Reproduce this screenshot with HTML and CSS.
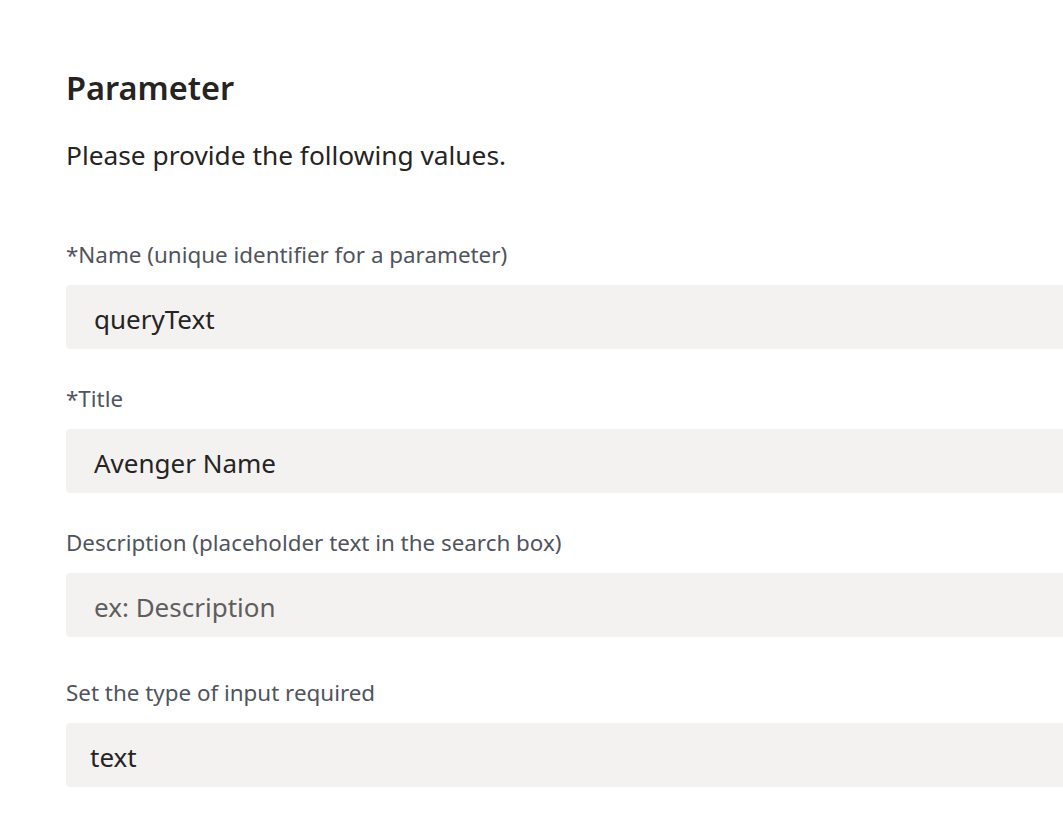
FILE: index.html
```html
<!DOCTYPE html>
<html lang="en">
<head>
<meta charset="utf-8">
<title>Parameter</title>
<link rel="stylesheet" href="styles.css">
</head>
<body>
<main class="page">
  <h1 class="title">Parameter</h1>
  <p class="intro">Please provide the following values.</p>
  <form class="form">
    <div class="field">
      <label class="label" for="f-name">*Name (unique identifier for a parameter)</label>
      <input class="input" id="f-name" type="text" value="queryText">
    </div>
    <div class="field">
      <label class="label" for="f-title">*Title</label>
      <input class="input" id="f-title" type="text" value="Avenger Name">
    </div>
    <div class="field">
      <label class="label" for="f-desc">Description (placeholder text in the search box)</label>
      <input class="input" id="f-desc" type="text" placeholder="ex: Description">
    </div>
    <div class="field field-type">
      <label class="label" for="f-type">Set the type of input required</label>
      <div class="select" id="f-type">text</div>
    </div>
  </form>
</main>
</body>
</html>
```
FILE: styles.css
```css
html, body {
  margin: 0;
  padding: 0;
  background: #ffffff;
  overflow: hidden;
}
.page {
  padding: 64px 0 0 66px;
  font-family: "Noto Sans", "Open Sans", sans-serif;
  color: #252423;
}
.title {
  margin: 0;
  font-size: 32.5px;
  line-height: 48px;
  font-weight: 600;
}
.intro {
  margin: 25px 0 0;
  font-size: 26.3px;
  line-height: 36px;
}
.form {
  margin: 67px -60px 0 0;
  display: flex;
  flex-direction: column;
  gap: 35px;
}
.field {
  display: flex;
  flex-direction: column;
  gap: 15px;
}
.field-type {
  margin-top: 6px;
}
.label {
  font-size: 22.4px;
  line-height: 30px;
  color: #50545d;
}
.input, .select {
  box-sizing: border-box;
  height: 64px;
  border: none;
  border-radius: 4px;
  background: #f3f2f1;
  padding: 4px 0 0 28px;
  font-family: inherit;
  font-size: 26px;
  color: #252423;
  outline: none;
}
.input::placeholder {
  color: #605e5c;
  opacity: 1;
}
.select {
  display: flex;
  align-items: center;
  padding-left: 24px;
}
```
